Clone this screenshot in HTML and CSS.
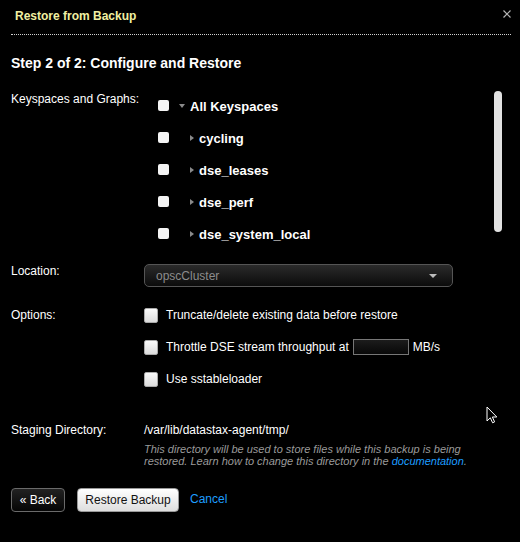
FILE: index.html
```html
<!DOCTYPE html>
<html lang="en">
<head>
    <meta charset="UTF-8">
    <title>Restore from Backup</title>
    <link rel="stylesheet" href="styles.css">
</head>
<body>
    <div class="modal">
        <header class="modal-head">
            <h1 class="modal-title">Restore from Backup</h1>
            <span class="close">
                <svg width="8" height="8" viewBox="0 0 8 8"><path d="M0.5 0.5 L7.5 7.5 M7.5 0.5 L0.5 7.5" stroke="#b4b4b4" stroke-width="1.2"/></svg>
            </span>
        </header>

        <h2 class="step">Step 2 of 2: Configure and Restore</h2>

        <form class="restore-form">
            <div class="row">
                <label class="labels labels-tree">Keyspaces and Graphs:</label>
                <div class="tree-box">
                    <ul class="tree">
                        <li class="node">
                            <input type="checkbox" class="tree-check">
                            <span class="toggle open"></span>
                            <span class="node-name">All Keyspaces</span>
                        </li>
                        <li class="node child">
                            <input type="checkbox" class="tree-check">
                            <span class="toggle"></span>
                            <span class="node-name">cycling</span>
                        </li>
                        <li class="node child">
                            <input type="checkbox" class="tree-check">
                            <span class="toggle"></span>
                            <span class="node-name">dse_leases</span>
                        </li>
                        <li class="node child">
                            <input type="checkbox" class="tree-check">
                            <span class="toggle"></span>
                            <span class="node-name">dse_perf</span>
                        </li>
                        <li class="node child">
                            <input type="checkbox" class="tree-check">
                            <span class="toggle"></span>
                            <span class="node-name">dse_system_local</span>
                        </li>
                    </ul>
                    <div class="scroll-thumb"></div>
                </div>
            </div>

            <div class="row row-location">
                <label class="labels">Location:</label>
                <div class="select">
                    <span>opscCluster</span>
                    <span class="caret"></span>
                </div>
            </div>

            <div class="row row-options">
                <label class="labels labels-options">Options:</label>
                <div class="options">
                    <div class="option">
                        <input type="checkbox" class="opt-check">
                        <span>Truncate/delete existing data before restore</span>
                    </div>
                    <div class="option">
                        <input type="checkbox" class="opt-check">
                        <span>Throttle DSE stream throughput at</span>
                        <input type="text" class="throttle">
                        <span>MB/s</span>
                    </div>
                    <div class="option">
                        <input type="checkbox" class="opt-check">
                        <span>Use sstableloader</span>
                    </div>
                </div>
            </div>

            <div class="row row-staging">
                <label class="labels">Staging Directory:</label>
                <div>
                    <div class="staging-path">/var/lib/datastax-agent/tmp/</div>
                    <p class="help">This directory will be used to store files while this backup is being restored. Learn how to change this directory in the <a href="#">documentation</a>.</p>
                </div>
            </div>

            <div class="actions">
                <button type="button" class="btn btn-back">&laquo; Back</button>
                <button type="submit" class="btn btn-restore">Restore Backup</button>
                <a href="#" class="cancel">Cancel</a>
            </div>
        </form>
    </div>

    <svg class="cursor" width="12" height="18" viewBox="0 0 12 18"><path d="M1 1 L1 15 L4.3 11.8 L6.6 16.8 L8.6 15.9 L6.4 11 L10.8 11 Z" fill="#000" stroke="#fff" stroke-width="1"/></svg>
</body>
</html>
```

FILE: styles.css
```css
*, *::before, *::after
{
    box-sizing: border-box;
    margin: 0;
    padding: 0;
}
body
{
    background: #000;
    color: #fff;
    font-family: "Liberation Sans", Arial, sans-serif;
    font-size: 12px;
    width: 520px;
    height: 542px;
    overflow: hidden;
}
.modal
{
    padding: 0 9px 0 11px;
}
.modal-head
{
    display: flex;
    justify-content: space-between;
    height: 35px;
    border-bottom: 1px dotted #d0d0d0;
}
.modal-title
{
    font-size: 12px;
    font-weight: bold;
    color: #f0f0a2;
    padding-left: 4px;
    line-height: 14px;
    margin-top: 9px;
}
.close
{
    margin-top: 10px;
    height: 8px;
    line-height: 0;
}
.step
{
    font-size: 14px;
    font-weight: bold;
    line-height: 17px;
    margin-top: 20px;
    margin-bottom: 18px;
}
.row
{
    display: grid;
    grid-template-columns: 133px 1fr;
    align-items: start;
}
.labels
{
    line-height: 14px;
}
.labels-tree
{
    padding-top: 2px;
}
.tree-box
{
    display: flex;
    height: 160px;
}
.tree
{
    list-style: none;
    flex: 1;
    padding-left: 14px;
}
.node
{
    display: flex;
    align-items: center;
    height: 32px;
    font-size: 13px;
    font-weight: bold;
}
.tree-check
{
    appearance: none;
    width: 11px;
    height: 11px;
    background: #f4f4f4;
    border-radius: 2px;
    margin-right: 10px;
    margin-top: -1px;
}
.toggle
{
    width: 0;
    height: 0;
    border-left: 3px solid transparent;
    border-right: 3px solid transparent;
    border-top: 4px solid #8a8a8a;
    margin-right: 5px;
}
.child .toggle
{
    border-top: 3px solid transparent;
    border-bottom: 3px solid transparent;
    border-left: 4px solid #8a8a8a;
    border-right: 0;
    margin-left: 11px;
}
.scroll-thumb
{
    width: 8px;
    height: 141px;
    margin-top: 1px;
    margin-right: 9px;
    background: #e2e2e2;
    border-radius: 4px;
}
.row-location
{
    margin-top: 14px;
}
.select
{
    display: flex;
    justify-content: space-between;
    align-items: center;
    width: 309px;
    height: 23px;
    border: 1px solid #555;
    border-radius: 5px;
    background: linear-gradient(#2b2b2b, #0b0b0b);
    color: #8c8c8c;
    padding: 0 15px 0 11px;
}
.caret
{
    width: 0;
    height: 0;
    border-left: 4px solid transparent;
    border-right: 4px solid transparent;
    border-top: 4px solid #bdbdbd;
}
.row-options
{
    margin-top: 12px;
}
.labels-options
{
    padding-top: 9px;
}
.option
{
    display: flex;
    align-items: center;
    height: 32px;
}
.opt-check
{
    appearance: none;
    width: 14px;
    height: 15px;
    border: 1px solid #aaa;
    border-radius: 2px;
    background: linear-gradient(#fafafa, #dcdcdc);
    margin-right: 8px;
}
.throttle
{
    width: 56px;
    height: 16px;
    border: 1px solid #777;
    background: linear-gradient(#1c1c1c, #080808);
    margin: 0 4px 0 4px;
    outline: none;
}
.row-staging
{
    margin-top: 28px;
}
.staging-path
{
    line-height: 14px;
}
.help
{
    width: 340px;
    margin-top: 6px;
    font-size: 11px;
    font-style: italic;
    line-height: 12px;
    color: #9a9a9a;
}
.help a
{
    color: #1e9dff;
    text-decoration: none;
}
.actions
{
    display: flex;
    align-items: center;
    margin-top: 21px;
}
.btn
{
    font-family: inherit;
    font-size: 12px;
    height: 24px;
    border-radius: 4px;
    cursor: pointer;
}
.btn-back
{
    width: 54px;
    background: linear-gradient(#222, #050505);
    color: #fff;
    border: 1px solid #6a6a6a;
}
.btn-restore
{
    width: 102px;
    margin-left: 12px;
    background: linear-gradient(#ffffff, #dedede);
    color: #111;
    border: 1px solid #999;
}
.cancel
{
    margin-left: 11px;
    margin-top: -2px;
    color: #1e9dff;
    text-decoration: none;
}
.cursor
{
    position: absolute;
    left: 486px;
    top: 406px;
}
```
